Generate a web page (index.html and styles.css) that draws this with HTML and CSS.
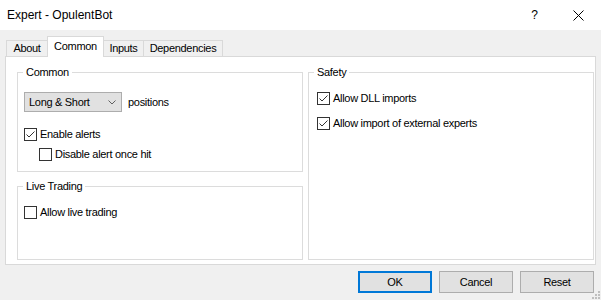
FILE: index.html
```html
<!doctype html>
<html>
<head>
<meta charset="utf-8">
<title>Expert - OpulentBot</title>
<link rel="stylesheet" href="styles.css">
</head>

<body>
<div class="titlebar">
	<span class="title">Expert - OpulentBot</span>
	<span class="help">?</span>
	<svg class="close" width="11" height="11" viewBox="0 0 11 11"><path d="M0.5 0.5L10.5 10.5M10.5 0.5L0.5 10.5" stroke="#000" stroke-width="1"/></svg>
</div>
<div class="dialog">
	<ul class="tabs">
		<li class="tab tab-about">About</li>
		<li class="tab tab-common active">Common</li>
		<li class="tab tab-inputs">Inputs</li>
		<li class="tab tab-deps">Dependencies</li>
	</ul>
	<div class="panel">
		<div class="col">
			<div class="group group-common">
				<span class="group-title">Common</span>
				<div class="select-row">
					<div class="select">
						<span>Long &amp; Short</span>
						<svg width="8" height="5" viewBox="0 0 8 5"><path d="M0.5 0.5L4 4L7.5 0.5" fill="none" stroke="#606060"/></svg>
					</div>
					<span>positions</span>
				</div>
				<label class="check check-first">
					<svg width="13" height="13" viewBox="0 0 13 13"><rect x="0.5" y="0.5" width="12" height="12" fill="#fff" stroke="#333"/><path d="M2.5 6.5L5 9L10.5 3.5" fill="none" stroke="#333"/></svg>
					<span>Enable alerts</span>
				</label>
				<label class="check check-sub">
					<svg width="13" height="13" viewBox="0 0 13 13"><rect x="0.5" y="0.5" width="12" height="12" fill="#fff" stroke="#333"/></svg>
					<span>Disable alert once hit</span>
				</label>
			</div>
			<div class="group group-live">
				<span class="group-title">Live Trading</span>
				<label class="check">
					<svg width="13" height="13" viewBox="0 0 13 13"><rect x="0.5" y="0.5" width="12" height="12" fill="#fff" stroke="#333"/></svg>
					<span>Allow live trading</span>
				</label>
			</div>
		</div>
		<div class="group group-safety">
			<span class="group-title">Safety</span>
			<label class="check">
				<svg width="13" height="13" viewBox="0 0 13 13"><rect x="0.5" y="0.5" width="12" height="12" fill="#fff" stroke="#333"/><path d="M2.5 6.5L5 9L10.5 3.5" fill="none" stroke="#333"/></svg>
				<span>Allow DLL imports</span>
			</label>
			<label class="check check-wide">
				<svg width="13" height="13" viewBox="0 0 13 13"><rect x="0.5" y="0.5" width="12" height="12" fill="#fff" stroke="#333"/><path d="M2.5 6.5L5 9L10.5 3.5" fill="none" stroke="#333"/></svg>
				<span>Allow import of external experts</span>
			</label>
		</div>
	</div>
	<div class="buttons">
		<button class="btn btn-default">OK</button>
		<button class="btn">Cancel</button>
		<button class="btn">Reset</button>
	</div>
</div>
<svg class="grip" width="10" height="10" viewBox="0 0 10 10">
	<rect x="7" y="1" width="2" height="2" fill="#bfbfbf"/>
	<rect x="4" y="4" width="2" height="2" fill="#bfbfbf"/>
	<rect x="7" y="4" width="2" height="2" fill="#bfbfbf"/>
	<rect x="1" y="7" width="2" height="2" fill="#bfbfbf"/>
	<rect x="4" y="7" width="2" height="2" fill="#bfbfbf"/>
	<rect x="7" y="7" width="2" height="2" fill="#bfbfbf"/>
</svg>
</body>
</html>
```

FILE: styles.css
```css
*{ margin:0; padding:0; list-style:none; box-sizing:border-box;}
html,body{ width:601px; height:300px; overflow:hidden;}
body{ background:#f0f0f0; font-family:"Liberation Sans", Arial, sans-serif; font-size:11px; color:#000; position:relative;}

.titlebar{ height:30px; background:#fff; display:flex; align-items:center; padding-left:7px;}
.titlebar .title{ font-size:12px; flex:1;}
.titlebar .help{ font-size:12px; margin-right:35px;}
.titlebar .close{ margin-right:17px;}

.dialog{ padding:0 5px 0 5px; letter-spacing:-0.3px;}

.tabs{ display:flex; align-items:flex-end; height:20px; margin-top:6px; padding-left:1px;}
.tab{ height:16px; line-height:14px; border:1px solid #d9d9d9; border-bottom:none; background:#f0f0f0; text-align:center; margin-left:-1px;}
.tab:first-child{ margin-left:0;}
.tab.active{ height:21px; margin-bottom:-1px; background:#fff; line-height:18px; position:relative; z-index:2;}
.tab-about{ width:42px;}
.tab-common{ width:57px;}
.tab-inputs{ width:41px;}
.tab-deps{ width:80px;}

.panel{ height:209px; background:#fff; border:1px solid #d9d9d9; display:grid; grid-template-columns:286px 286px; column-gap:5px; padding:15px 1px 4px 11px; position:relative; z-index:1;}
.col{ display:flex; flex-direction:column; gap:14px;}

.group{ border:1px solid #dcdcdc; position:relative; padding:19px 0 0 6px;}
.group-title{ position:absolute; top:-7px; left:5px; padding:0 3px; background:#fff; line-height:13px;}
.group-common{ height:100px;}
.group-live{ flex:1;}
.group-safety{ padding-left:8px;}

.select-row{ display:flex; align-items:center; height:20px; gap:6px;}
.select{ width:98px; height:20px; background:#e1e1e1; border:1px solid #adadad; display:flex; align-items:center; justify-content:space-between; padding:0 5px 0 4px;}
.select svg{ display:block;}

.check{ display:flex; align-items:center; height:13px; line-height:13px; gap:3px;}
.check svg{ display:block; flex:none;}
.check-first{ margin-top:16px;}
.check-sub{ margin-top:7px; margin-left:15px;}
.check-wide{ margin-top:12px;}

.buttons{ display:flex; justify-content:flex-end; gap:7px; margin-top:6px; margin-right:2px;}
.btn{ width:74px; height:22px; background:#e1e1e1; border:1px solid #adadad; font-family:"Liberation Sans", Arial, sans-serif; font-size:11px; letter-spacing:-0.3px; color:#000;}
.btn-default{ border:2px solid #0078d7;}

.grip{ position:absolute; right:0; bottom:0;}
```
